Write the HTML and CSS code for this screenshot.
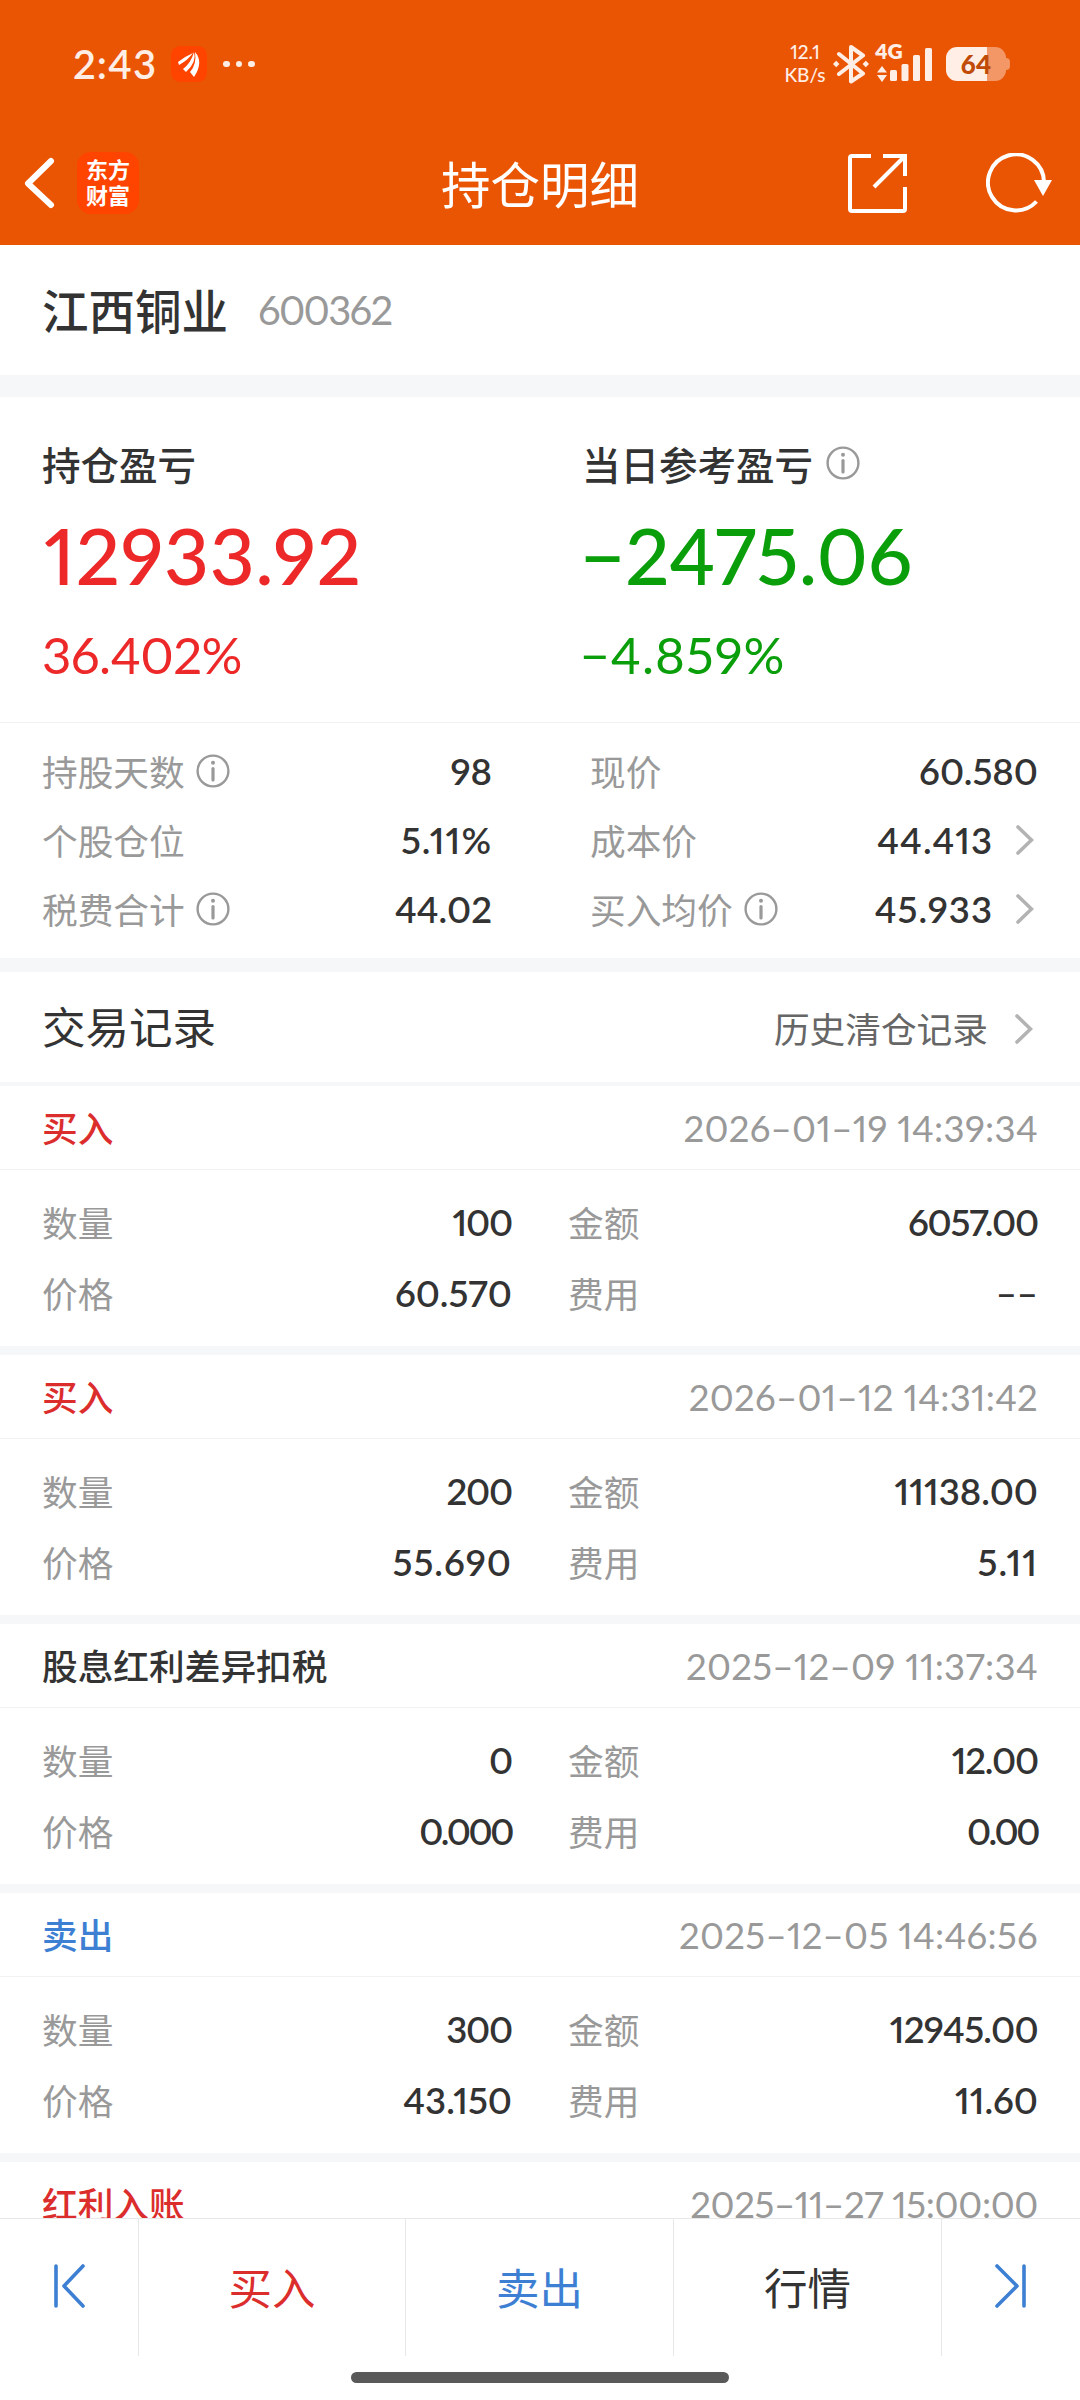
FILE: index.html
```html
<!DOCTYPE html>
<html lang="zh-CN">
<head>
<meta charset="utf-8">
<title>持仓明细</title>
<link rel="stylesheet" href="styles.css">
</head>
<body>
<svg class="defs" width="0" height="0">
  <symbol id="info" viewBox="0 0 34 34"><circle cx="17" cy="17" r="15.4" fill="none" stroke="#999" stroke-width="2.4"/><circle cx="17" cy="8.8" r="2" fill="#999"/><path d="M17 14.6V26" stroke="#999" stroke-width="3.2" stroke-linecap="round"/></symbol>
  <symbol id="more" viewBox="0 0 18 30"><path d="M2 2L15.5 15L2 28" fill="none" stroke="#b3b3b3" stroke-width="3.6" stroke-linecap="round"/></symbol>
</svg>
<div class="screen">
  <header class="top">
    <div class="status">
      <span class="time">2:43</span>
      <svg class="app" viewBox="0 0 36 36"><rect width="36" height="36" rx="9" fill="#ff4400"/><path d="M7 16Q13 11 22 7Q17 14 8 19Z M12 23Q20 17 23 6Q26 16 15 26Z M19 26Q26 18 24 6Q33 16 23 31Z" fill="#fff"/></svg>
      <span class="dots"><i></i><i></i><i></i></span>
      <span class="speed"><span>12.1</span><span>KB/s</span></span>
      <svg class="bt" viewBox="0 0 36 40"><path d="M6 10L30 29.5L18 37.5V3L30 11.5L6 30" fill="none" stroke="#ffeee6" stroke-width="4" stroke-linejoin="round" stroke-linecap="round"/><path d="M3.2 16.8L6.4 20L3.2 23.2L0 20ZM32.8 16.8L36 20L32.8 23.2L29.600 20Z" fill="#ffeee6"/></svg>
      <span class="net"><span class="gen">4G</span>
        <svg viewBox="0 0 58 36" width="58" height="36"><g fill="#ffeee6"><path d="M7 20L12 26.500H2ZM7 36L2 29H12Z"/><rect x="15" y="24" width="7" height="11" rx="1.500"/><rect x="26.500" y="18" width="7" height="17" rx="1.500"/><rect x="38" y="9" width="7" height="26" rx="1.500"/><rect x="50" y="2" width="7" height="33" rx="1.500"/></g></svg>
      </span>
      <span class="battery"><b>64</b></span>
    </div>
    <nav class="bar">
      <svg class="back" viewBox="0 0 32 52"><path d="M28 4L5 26.500L28 48" fill="none" stroke="#fff" stroke-width="6" stroke-linecap="round" stroke-linejoin="round"/></svg>
      <span class="logo">东方<br>财富</span>
      <h1>持仓明细</h1>
      <svg class="share" viewBox="0 0 60 60"><g fill="none" stroke="#fff" stroke-width="4"><path d="M24 3H5Q3 3 3 5V56Q3 58 5 58H56Q58 58 58 56V34"/><path d="M36 3H58V23M57 4L27 34"/></g></svg>
      <svg class="reload" viewBox="0 0 68 60"><path d="M50.500 48.500A28 28 0 1 1 58 29" fill="none" stroke="#fff" stroke-width="4"/><path d="M48 27H66L57 43Z" fill="#fff"/></svg>
    </nav>
  </header>

  <section class="stock"><h2>江西铜业</h2><span class="code">600362</span></section>

  <section class="profit">
    <div class="up">
      <h3>持仓盈亏</h3>
      <strong>12933.92</strong>
      <em>36.402%</em>
    </div>
    <div class="down">
      <h3>当日参考盈亏<svg class="info"><use href="#info"/></svg></h3>
      <strong>−2475.06</strong>
      <em>−4.859%</em>
    </div>
  </section>

  <section class="facts">
    <dl>
      <div><dt>持股天数<svg class="info"><use href="#info"/></svg></dt><dd>98</dd></div>
      <div><dt>个股仓位</dt><dd class="loose">5.11%</dd></div>
      <div><dt>税费合计<svg class="info"><use href="#info"/></svg></dt><dd>44.02</dd></div>
    </dl>
    <dl>
      <div><dt>现价</dt><dd>60.580</dd></div>
      <div><dt>成本价</dt><dd class="loose">44.413<svg class="more"><use href="#more"/></svg></dd></div>
      <div><dt>买入均价<svg class="info"><use href="#info"/></svg></dt><dd class="loose">45.933<svg class="more"><use href="#more"/></svg></dd></div>
    </dl>
  </section>

  <section class="records">
    <div class="heading"><h2>交易记录</h2><a>历史清仓记录<svg class="more"><use href="#more"/></svg></a></div>

    <article>
      <header><b class="buy">买入</b><time>2026–01–19 14:39:34</time></header>
      <dl><div><dt>数量</dt><dd class="tight">100</dd></div><div><dt>金额</dt><dd class="tight">6057.00</dd></div><div><dt>价格</dt><dd>60.570</dd></div><div><dt>费用</dt><dd class="none">––</dd></div></dl>
    </article>
    <article>
      <header><b class="buy">买入</b><time>2026–01–12 14:31:42</time></header>
      <dl><div><dt>数量</dt><dd class="tight">200</dd></div><div><dt>金额</dt><dd>11138.00</dd></div><div><dt>价格</dt><dd class="loose">55.690</dd></div><div><dt>费用</dt><dd class="loose">5.11</dd></div></dl>
    </article>
    <article>
      <header><b>股息红利差异扣税</b><time>2025–12–09 11:37:34</time></header>
      <dl><div><dt>数量</dt><dd class="tight">0</dd></div><div><dt>金额</dt><dd class="tight">12.00</dd></div><div><dt>价格</dt><dd class="tight zeros">0.000</dd></div><div><dt>费用</dt><dd class="tight zeros">0.00</dd></div></dl>
    </article>
    <article>
      <header><b class="sell">卖出</b><time>2025–12–05 14:46:56</time></header>
      <dl><div><dt>数量</dt><dd class="tight">300</dd></div><div><dt>金额</dt><dd class="snug">12945.00</dd></div><div><dt>价格</dt><dd>43.150</dd></div><div><dt>费用</dt><dd>11.60</dd></div></dl>
    </article>
    <article>
      <header><b class="buy">红利入账</b><time class="snug">2025–11–27 15:00:00</time></header>
    </article>
  </section>

  <footer class="actions">
    <div class="tabs">
      <a class="edge"><svg viewBox="0 0 32 46"><path d="M3 3V43M30 3L11 23L30 43" fill="none" stroke="#3d7fd2" stroke-width="3.600" stroke-linecap="round" stroke-linejoin="round"/></svg></a>
      <a class="buy">买入</a>
      <a class="sell">卖出</a>
      <a>行情</a>
      <a class="edge"><svg viewBox="0 0 32 46"><path d="M29 3V43M2 3L22 23L2 43" fill="none" stroke="#3d7fd2" stroke-width="3.600" stroke-linecap="round" stroke-linejoin="round"/></svg></a>
    </div>
    <div class="home"></div>
  </footer>
</div>
</body>
</html>
```
FILE: styles.css
```css
* { box-sizing: border-box; margin: 0; padding: 0; }
body { width: 1080px; height: 2400px; overflow: hidden; background: #fff; color: #333; font-family: Lato, "Noto Sans CJK SC", sans-serif; font-feature-settings: "pnum"; }
h1, h2, h3, dt, article b, a { font-family: "Noto Sans CJK SC", sans-serif; }
svg { display: block; flex: none; }
.defs { position: absolute; }
.screen { display: flex; flex-direction: column; height: 2400px; }
h1, h2, h3, em, i { font-weight: 400; font-style: normal; }

.top { height: 245px; flex: none; background: #ea5504; color: #fff; }
.status { display: flex; height: 129px; align-items: center; padding: 0 74px 1px 73px; color: #ffeee6; }
.time { width: 98px; font-size: 40px; font-weight: 600; letter-spacing: 1px; }
.app { width: 36px; height: 36px; }
.dots { display: flex; gap: 6px; margin-left: 16px; }
.dots i { width: 6.500px; height: 6.500px; border-radius: 50%; background: #ffeee6; }
.speed { display: flex; flex-direction: column; width: 44px; margin-left: auto; padding-bottom: 3px; font-size: 19px; line-height: 23px; font-weight: 500; text-align: center; white-space: nowrap; }
.bt { width: 36px; height: 40px; margin-left: 6px; }
.net { position: relative; width: 58px; height: 36px; margin-left: 6px; }
.gen { position: absolute; left: 0; top: -7px; font-size: 21px; line-height: 24px; font-weight: 800; }
.battery { position: relative; display: flex; align-items: center; justify-content: center; width: 60px; height: 34px; margin-left: 13px; border-radius: 11px; background: linear-gradient(90deg, #ffeee6 41px, #f39766 41px); }
.battery::after { content: ""; position: absolute; right: -4px; top: 11px; width: 5px; height: 12px; border-radius: 0 4px 4px 0; background: #f39766; }
.battery b { font-size: 26px; line-height: 34px; font-weight: 900; color: #c04a08; }

.bar { display: flex; height: 116px; align-items: center; padding: 0 26px 9px 23px; }
.back { width: 32px; height: 52px; }
.logo { width: 62px; height: 62px; margin-left: 22px; padding: 3px 0; border-radius: 14px; background: #ff4400; text-align: center; font: 700 22px/26px "Noto Sans CJK SC", sans-serif; }
.bar h1 { width: 500px; font-size: 49.500px; line-height: 62px; text-align: right; }
.share { width: 60px; height: 60px; margin-left: auto; margin-right: 79px; }
.reload { width: 68px; height: 60px; }

.stock { display: flex; align-items: center; gap: 30px; height: 152px; flex: none; padding: 0 42px; border-bottom: 22px solid #f6f7f9; }
.stock h2 { padding-bottom: 3px; font-size: 46.500px; line-height: 60px; font-weight: 500; }
.code { font-size: 40px; color: #999; letter-spacing: -1.700px; }

.profit { display: grid; grid-template-columns: 540px 1fr; height: 326px; flex: none; padding: 36px 0 0 42px; border-bottom: 1px solid #f2f2f4; }
.profit h3 { display: flex; align-items: center; gap: 13px; height: 60px; font-size: 38.500px; line-height: 60px; font-weight: 500; color: #333; }
.profit strong { display: block; height: 100px; margin-top: 12px; font-size: 78px; line-height: 100px; font-weight: 500; }
.profit em { display: block; height: 60px; margin-top: 20px; font-size: 51px; line-height: 60px; }
.up { color: #ec2828; }
.down { color: #0a9f0a; }
.up strong { padding-left: 2px; letter-spacing: .6px; }
.up em { letter-spacing: -.6px; }
.down em { letter-spacing: 1px; }
.down strong, .down em { margin-left: -2px; }
.info { width: 34px; height: 34px; }

.facts { display: grid; grid-template-columns: 450px 448px; column-gap: 98px; height: 249px; flex: none; padding: 13px 0 0 42px; border-bottom: 14px solid #f6f7f9; }
.facts dl > div, .records dl > div { display: flex; justify-content: space-between; align-items: center; }
.facts dl > div { height: 69px; }
dt { display: flex; align-items: center; gap: 11px; font-size: 35.700px; color: #999; }
dd { display: flex; align-items: center; gap: 23px; font-size: 36.500px; font-weight: 600; }
.loose { letter-spacing: 1px; }
.tight { letter-spacing: -1.200px; }
.snug { letter-spacing: -.7px; }
.zeros { letter-spacing: -2.400px; }
.more { width: 18px; height: 30px; margin-right: 4px; }

.records { flex: 1; overflow: hidden; }
.heading { display: flex; align-items: center; justify-content: space-between; height: 114px; padding: 0 43px 0 42px; border-bottom: 4px solid #f6f7f9; }
.heading h2 { padding-bottom: 3px; font-size: 43.500px; }
.heading a { display: flex; align-items: center; gap: 27px; font-size: 35.700px; color: #666; }
.heading .more { margin-top: 4px; }
article { height: 269px; border-bottom: 9px solid #f6f7f9; }
article header { display: flex; align-items: center; justify-content: space-between; height: 84px; padding: 0 42px; border-bottom: 1px solid #f2f2f4; }
article b { padding-bottom: 3px; font-size: 35.700px; font-weight: 500; }
time { font-size: 36.500px; color: #999; letter-spacing: .3px; }
time.snug { letter-spacing: -.35px; }
.records dl { display: grid; grid-template-columns: 470px 470px; grid-auto-rows: 71px; column-gap: 56px; padding: 16px 0 0 42px; }
.records dt { padding-bottom: 1px; }
.buy { color: #dc2d2d; }
.sell { color: #3d7fd2; }

.actions { height: 182px; flex: none; border-top: 1px solid #e8e8e8; background: #fff; }
.tabs { display: grid; grid-template-columns: 139px 267px 268px 268px 138px; height: 137px; }
.tabs a { display: flex; align-items: center; justify-content: center; padding-bottom: 2px; font-size: 43.500px; border-right: 1px solid #e8e8e8; }
.tabs a:last-child { border: 0; }
.edge svg { width: 32px; height: 46px; margin-bottom: 1px; }
.home { width: 378px; height: 11px; margin: 16px auto 0; border-radius: 6px; background: #595959; }
```
